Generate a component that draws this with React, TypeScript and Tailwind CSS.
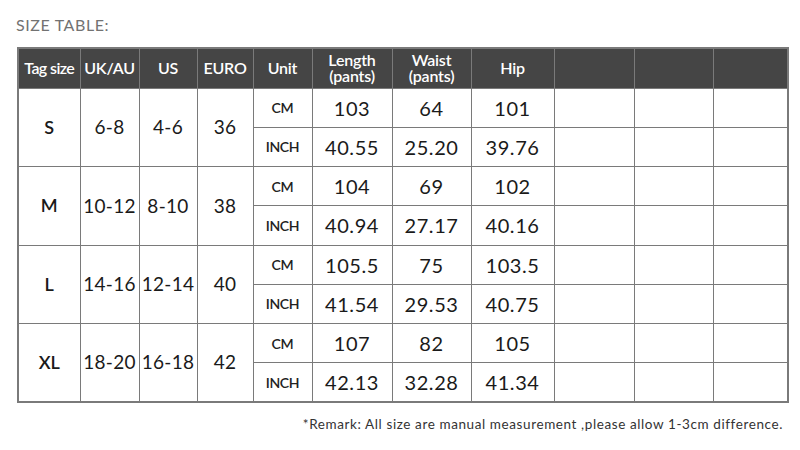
import React from 'react';

const rows = [
    { tag: 'S', uk: '6-8', us: '4-6', euro: '36', cm: ['103', '64', '101'], inch: ['40.55', '25.20', '39.76'] },
    { tag: 'M', uk: '10-12', us: '8-10', euro: '38', cm: ['104', '69', '102'], inch: ['40.94', '27.17', '40.16'] },
    { tag: 'L', uk: '14-16', us: '12-14', euro: '40', cm: ['105.5', '75', '103.5'], inch: ['41.54', '29.53', '40.75'] },
    { tag: 'XL', uk: '18-20', us: '16-18', euro: '42', cm: ['107', '82', '105'], inch: ['42.13', '32.28', '41.34'] },
];

const widths = [62, 59, 58, 56, 59, 80, 79, 83, 80, 79, 75];

export default function App() {
    const cell = 'border border-[#7a7a7a] text-center align-middle p-0';
    const num = `${cell} text-[20px] text-[#1a1a1a] tracking-[0.6px]`;
    const unit = `${cell} text-[14px] font-semibold text-[#222] tracking-[-0.3px]`;
    const big = `${cell} text-[18px] font-semibold text-[#1a1a1a]`;
    const side = `${cell} text-[19px] text-[#1a1a1a] tracking-[0.3px]`;
    const head = 'border border-[#7a7a7a] bg-[#454545] text-white text-[16px] font-semibold text-center align-middle p-0 leading-[16px] tracking-[-0.2px]';

    return (
        <div className="w-[800px] h-[450px] bg-white font-['Lato','Noto_Sans',sans-serif] pt-[15px]">
            <div className="pl-[16px] text-[16px] text-[#727272] tracking-[0.6px] leading-[20px]">SIZE TABLE:</div>
            <table className="ml-[17px] mt-[12px] border-collapse table-fixed w-[770px] border-2 border-[#7a7a7a]">
                <colgroup>
                    {widths.map((w, i) => (
                        <col key={i} style={{ width: w }} />
                    ))}
                </colgroup>
                <thead>
                    <tr className="h-[40px]">
                        <th className={`${head} text-[15px] tracking-[-0.6px]`}>Tag size</th>
                        <th className={head}>UK/AU</th>
                        <th className={head}>US</th>
                        <th className={head}>EURO</th>
                        <th className={head}>Unit</th>
                        <th className={head}>
                            <div className="h-[16px]">Length</div>
                            <div className="h-[16px]">(pants)</div>
                        </th>
                        <th className={head}>
                            <div className="h-[16px]">Waist</div>
                            <div className="h-[16px]">(pants)</div>
                        </th>
                        <th className={head}>Hip</th>
                        <th className={head}></th>
                        <th className={head}></th>
                        <th className={head}></th>
                    </tr>
                </thead>
                <tbody>
                    {rows.map((r) => (
                        <React.Fragment key={r.tag}>
                            <tr className="h-[39.25px]">
                                <td rowSpan={2} className={big}>{r.tag}</td>
                                <td rowSpan={2} className={side}>{r.uk}</td>
                                <td rowSpan={2} className={side}>{r.us}</td>
                                <td rowSpan={2} className={side}>{r.euro}</td>
                                <td className={unit}>CM</td>
                                {r.cm.map((v, i) => (
                                    <td key={i} className={num}>{v}</td>
                                ))}
                                <td className={cell}></td>
                                <td className={cell}></td>
                                <td className={cell}></td>
                            </tr>
                            <tr className="h-[39.25px]">
                                <td className={unit}>INCH</td>
                                {r.inch.map((v, i) => (
                                    <td key={i} className={num}>{v}</td>
                                ))}
                                <td className={cell}></td>
                                <td className={cell}></td>
                                <td className={cell}></td>
                            </tr>
                        </React.Fragment>
                    ))}
                </tbody>
            </table>
            <div className="w-[783px] text-right mt-[12px] text-[13.5px] text-[#333] tracking-[0.6px] leading-[18px]">
                *Remark: All size are manual measurement ,please allow 1-3cm difference.
            </div>
        </div>
    );
}
